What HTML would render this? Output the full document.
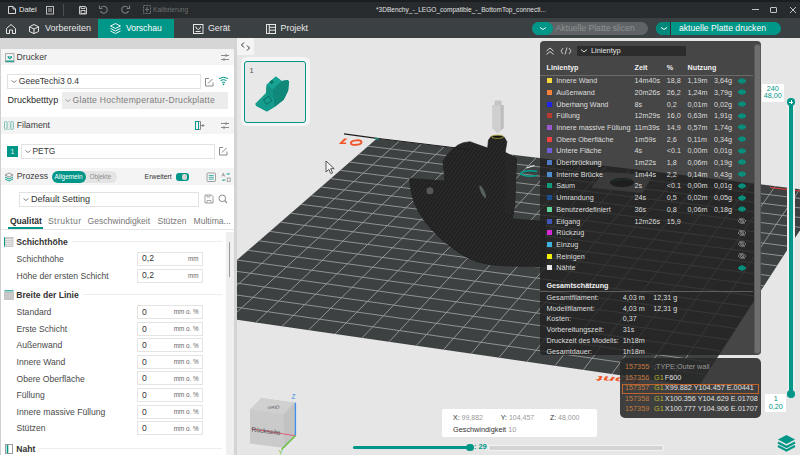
<!DOCTYPE html><html><head><meta charset="utf-8"><style>
html,body{margin:0;padding:0;}
body{width:800px;height:455px;overflow:hidden;position:relative;background:#e6e6e6;font-family:"Liberation Sans",sans-serif;}
.t{position:absolute;white-space:nowrap;}
.r{position:absolute;box-sizing:border-box;}
</style></head><body>
<div class="r" style="left:0px;top:0px;width:800px;height:18px;background:#272b2d;"></div>
<div class="r" style="left:0px;top:0px;width:800px;height:1.5px;background:#1b1e20;"></div>
<svg class="r" style="left:7px;top:5px;" width="10" height="10" viewBox="0 0 10 10"><path d="M1.5 1.5h4.5l2.5 2.5v4.5h-7z" style="stroke:#d8d8d8;fill:none;stroke-width:1;"/><path d="M6 1.5v2.5h2.5" style="stroke:#d8d8d8;fill:none;stroke-width:1;"/></svg>
<div class="t " style="left:19px;top:2.40px;font-size:7.6px;line-height:15.2px;color:#e8e8e8;font-weight:normal;">Datei</div>
<svg class="r" style="left:45px;top:5px;" width="10" height="10" viewBox="0 0 10 10"><rect x="1.5" y="1.5" width="7" height="7.5" style="stroke:#d8d8d8;fill:none;stroke-width:1;stroke:#bbb"/><path d="M3 4h4M3 6h4" style="stroke:#d8d8d8;fill:none;stroke-width:1;stroke:#bbb"/></svg>
<div class="r" style="left:63px;top:4px;width:1px;height:12px;background:#4a4f52;"></div>
<svg class="r" style="left:78px;top:5px;" width="10" height="10" viewBox="0 0 10 10"><path d="M1.5 1.5h6l1 1v6.5h-7z" style="stroke:#d8d8d8;fill:none;stroke-width:1;stroke:#c8c8c8"/><rect x="3" y="5.5" width="4" height="3" style="stroke:#d8d8d8;fill:none;stroke-width:1;stroke:#c8c8c8"/><path d="M3 1.5v2h4v-2" style="stroke:#d8d8d8;fill:none;stroke-width:1;stroke:#c8c8c8"/></svg>
<svg class="r" style="left:98px;top:4px;" width="11" height="11" viewBox="0 0 11 11"><path d="M3 3.5 A3.5 3.5 0 1 1 2.5 7" style="stroke:#7a7e80;fill:none;stroke-width:1.1"/><path d="M1.5 1.5v3h3" style="stroke:#7a7e80;fill:none;stroke-width:1.1"/></svg>
<svg class="r" style="left:120px;top:4px;" width="11" height="11" viewBox="0 0 11 11"><path d="M8 3.5 A3.5 3.5 0 1 0 8.5 7" style="stroke:#7a7e80;fill:none;stroke-width:1.1"/><path d="M9.5 1.5v3h-3" style="stroke:#7a7e80;fill:none;stroke-width:1.1"/></svg>
<svg class="r" style="left:142px;top:4px;" width="10" height="11" viewBox="0 0 10 11"><rect x="1.5" y="1.5" width="7" height="8" style="stroke:#6f7375;fill:none;stroke-width:1;stroke-dasharray:2 1"/><path d="M5 3v5M3 5.5h4" style="stroke:#6f7375;fill:none;stroke-width:1"/></svg>
<div class="t " style="left:153px;top:2.90px;font-size:6.6px;line-height:13.2px;color:#6c7072;font-weight:normal;">Kalibrierung</div>
<div class="t " style="left:376px;top:2.95px;font-size:6.55px;line-height:13.1px;color:#e0e0e0;font-weight:normal;">*3DBenchy_-_LEGO_compatible_-_BottomTop_connecti...</div>
<div class="r" style="left:752px;top:9px;width:7px;height:1px;background:#c4c4c4;"></div>
<div class="r" style="left:770px;top:6.5px;width:7px;height:6.5px;border:1px solid #c4c4c4;border-radius:1px;"></div>
<svg class="r" style="left:788.5px;top:6px;" width="8" height="8" viewBox="0 0 8 8"><path d="M1 1L7 7M7 1L1 7" style="stroke:#c4c4c4;stroke-width:1"/></svg>
<div class="r" style="left:0px;top:18px;width:800px;height:20px;background:#3b4043;"></div>
<div class="r" style="left:98px;top:19px;width:76px;height:19px;background:#009688;"></div>
<svg class="r" style="left:5px;top:23px;" width="12" height="12" viewBox="0 0 12 12"><path d="M1.5 5.5L6 1.5l4.5 4v5h-3v-3.5h-3v3.5h-3z" style="stroke:#e6e6e6;fill:none;stroke-width:1;stroke-linejoin:round"/></svg>
<svg class="r" style="left:28px;top:23px;" width="12" height="12" viewBox="0 0 12 12"><path d="M6 1.5l4.5 2.3v4.7L6 10.6 1.5 8.5V3.8z M1.5 3.8L6 6l4.5-2.2M6 6v4.5" style="stroke:#e6e6e6;fill:none;stroke-width:1;stroke-linejoin:round"/></svg>
<div class="t " style="left:45px;top:19.30px;font-size:9.0px;line-height:18.0px;color:#e8e8e8;font-weight:normal;">Vorbereiten</div>
<svg class="r" style="left:109px;top:22px;" width="13" height="13" viewBox="0 0 13 13"><path d="M6.5 1.5l5 2.5-5 2.5-5-2.5z M1.5 6.5l5 2.5 5-2.5 M1.5 9l5 2.5 5-2.5" style="stroke:#e6e6e6;fill:none;stroke-width:1;stroke:#e8f5f3;stroke-linejoin:round"/></svg>
<div class="t " style="left:126px;top:19.75px;font-size:8.55px;line-height:17.1px;color:#ffffff;font-weight:normal;">Vorschau</div>
<svg class="r" style="left:192px;top:23px;" width="12" height="12" viewBox="0 0 12 12"><rect x="1.5" y="1.5" width="9.5" height="9" style="stroke:#e6e6e6;fill:none;stroke-width:1;"/><path d="M4 3.5v1.5l2.2 1.6 2.2-1.6V3.5" style="stroke:#e6e6e6;fill:none;stroke-width:1;"/><path d="M3.5 8.5h5" style="stroke:#e6e6e6;fill:none;stroke-width:1;"/></svg>
<div class="t " style="left:208px;top:19.50px;font-size:8.8px;line-height:17.6px;color:#e8e8e8;font-weight:normal;">Gerät</div>
<svg class="r" style="left:265px;top:23px;" width="12" height="12" viewBox="0 0 12 12"><rect x="1.5" y="1.5" width="9" height="9" style="stroke:#e6e6e6;fill:none;stroke-width:1;"/><path d="M4.3 1.5v9M4.3 4.3h6.2M4.3 7.2h6.2" style="stroke:#e6e6e6;fill:none;stroke-width:1;"/></svg>
<div class="t " style="left:280.6px;top:19.50px;font-size:8.8px;line-height:17.6px;color:#e8e8e8;font-weight:normal;">Projekt</div>
<div class="r" style="left:532px;top:22px;width:116px;height:13px;background:#5f6365;border-radius:7px;"></div>
<div class="r" style="left:532px;top:22px;width:16px;height:13px;background:#009688;border-radius:7px 0 0 7px;"></div>
<div class="r" style="left:540px;top:22px;width:13px;height:13px;border-radius:50%;background:#009688"></div>
<svg class="r" style="left:537px;top:24px;" width="12" height="9" viewBox="0 0 12 9"><path d="M3 3.5l3 2 3-2" style="stroke:#fff;fill:none;stroke-width:1"/></svg>
<div class="t " style="left:555.5px;top:19.90px;font-size:8.6px;line-height:17.2px;color:#8d9193;font-weight:normal;">Aktuelle Platte slicen</div>
<div class="r" style="left:656px;top:22px;width:125px;height:13px;background:#009688;border-radius:7px;"></div>
<div class="r" style="left:656px;top:22px;width:14px;height:13px;background:#00897b;border-radius:7px 0 0 7px;"></div>
<div class="r" style="left:670px;top:22px;width:1px;height:13px;background:#2e3234;"></div>
<svg class="r" style="left:658px;top:24px;" width="12" height="9" viewBox="0 0 12 9"><path d="M3 3.5l3 2 3-2" style="stroke:#fff;fill:none;stroke-width:1"/></svg>
<div class="t " style="left:679px;top:19.90px;font-size:8.6px;line-height:17.2px;color:#ffffff;font-weight:normal;">aktuelle Platte drucken</div>
<div class="r" style="left:0px;top:38px;width:234px;height:417px;background:#ffffff;"></div>
<div class="r" style="left:0px;top:38px;width:1px;height:417px;background:#cfcfcf;"></div>
<div class="r" style="left:0px;top:38px;width:234px;height:11px;background:#d6d6d6;"></div>
<div class="r" style="left:234px;top:38px;width:3px;height:417px;background:#d4d4d4;"></div>
<div class="r" style="left:1px;top:49px;width:233px;height:16px;background:#f4f4f4;"></div>
<svg class="r" style="left:5px;top:52.5px;" width="10" height="10" viewBox="0 0 10 10"><rect x="0.6" y="0.6" width="8.4" height="8.4" style="stroke:#a0a0a0;fill:none;stroke-width:0.9"/><path d="M2.6 3.2h4.4v1.3L4.8 6.4 2.6 4.5z" fill="#009688"/><path d="M4.8 3.2v2" style="stroke:#fff;stroke-width:0.8"/><path d="M0.6 8.2h8.4" style="stroke:#009688;stroke-width:1.3"/></svg>
<div class="t " style="left:16.5px;top:48.50px;font-size:8.7px;line-height:17.4px;color:#3a3a3a;font-weight:normal;">Drucker</div>
<svg class="r" style="left:220px;top:52.5px;" width="10" height="9" viewBox="0 0 10 9"><path d="M1 2.5h8M1 6.5h8" style="stroke:#8a8a8a;fill:none;stroke-width:1;"/><path d="M6 1v3M4 5v3" style="stroke:#8a8a8a;fill:none;stroke-width:1;"/></svg>
<div class="r" style="left:7px;top:74px;width:194px;height:15px;border:1px solid #e2e2e2;background:#fff;"></div>
<svg class="r" style="left:11px;top:79px;" width="6" height="5" viewBox="0 0 6 5"><path d="M0.5 1.5l2.5 2 2.5-2" style="stroke:#777;fill:none;stroke-width:0.9"/></svg>
<div class="t " style="left:18.8px;top:73.40px;font-size:8.6px;line-height:17.2px;color:#333;font-weight:normal;">GeeeTechi3 0.4</div>
<svg class="r" style="left:204px;top:76.5px;" width="10" height="10" viewBox="0 0 10 10"><path d="M5 1.5H1.5v7.5h7.5V5.5" style="stroke:#8a8a8a;fill:none;stroke-width:1"/><path d="M4 6.5L8.5 2" style="stroke:#8a8a8a;fill:none;stroke-width:1"/></svg>
<svg class="r" style="left:218px;top:76px;" width="11" height="10" viewBox="0 0 11 10"><path d="M1 2.5q4.5-2.5 9 0M2.5 4.5q3-1.7 6 0M4 6.5q1.5-.8 3 0" style="stroke:#009688;fill:none;stroke-width:1"/><circle cx="5.5" cy="8.3" r="0.9" fill="#009688"/></svg>
<div class="t " style="left:7.4px;top:91.15px;font-size:9.05px;line-height:18.1px;color:#2a2a2a;font-weight:normal;">Druckbetttyp</div>
<div class="r" style="left:61.6px;top:92px;width:166.1px;height:16.5px;background:#ececec;"></div>
<svg class="r" style="left:65px;top:97.5px;" width="6" height="5" viewBox="0 0 6 5"><path d="M0.5 1.5l2.5 2 2.5-2" style="stroke:#999;fill:none;stroke-width:0.9"/></svg>
<div class="t " style="left:72.5px;top:91.80px;font-size:8.6px;line-height:17.2px;color:#7c7c7c;font-weight:normal;letter-spacing:0.28px;">Glatte Hochtemperatur-Druckplatte</div>
<div class="r" style="left:1px;top:117px;width:233px;height:17px;background:#f4f4f4;"></div>
<svg class="r" style="left:4px;top:121px;" width="10" height="9" viewBox="0 0 10 9"><rect x="0.5" y="0.5" width="2.5" height="8" rx="1" style="stroke:#6fb8ae;fill:none;stroke-width:0.9"/><rect x="3.7" y="0.5" width="2.5" height="8" rx="1" style="stroke:#a8cfca;fill:none;stroke-width:0.9"/><rect x="6.9" y="0.5" width="2.5" height="8" rx="1" style="stroke:#6fb8ae;fill:none;stroke-width:0.9"/></svg>
<div class="t " style="left:16.7px;top:116.90px;font-size:8.7px;line-height:17.4px;color:#3a3a3a;font-weight:normal;">Filament</div>
<svg class="r" style="left:195px;top:120.5px;" width="10" height="9" viewBox="0 0 10 9"><rect x="0.5" y="0.5" width="3" height="8" style="stroke:#009688;fill:none;stroke-width:1"/><path d="M3.5 0.5h2v8h-2M6 4.5h3.5M8 3v3" style="stroke:#888;fill:none;stroke-width:1"/></svg>
<svg class="r" style="left:220px;top:121px;" width="10" height="9" viewBox="0 0 10 9"><path d="M1 2.5h8M1 6.5h8" style="stroke:#8a8a8a;fill:none;stroke-width:1;"/><path d="M6 1v3M4 5v3" style="stroke:#8a8a8a;fill:none;stroke-width:1;"/></svg>
<div class="r" style="left:7px;top:146px;width:11px;height:11px;background:#009688;"></div>
<div class="t " style="left:-187.5px;width:400px;text-align:center;top:144.60px;font-size:7px;line-height:14px;color:#e8f5f3;font-weight:normal;">1</div>
<div class="r" style="left:21.3px;top:144px;width:194.2px;height:14.5px;border:1px solid #e2e2e2;background:#fff;"></div>
<svg class="r" style="left:25px;top:148.5px;" width="6" height="5" viewBox="0 0 6 5"><path d="M0.5 1.5l2.5 2 2.5-2" style="stroke:#777;fill:none;stroke-width:0.9"/></svg>
<div class="t " style="left:32.5px;top:142.80px;font-size:8.4px;line-height:16.8px;color:#333;font-weight:normal;">PETG</div>
<svg class="r" style="left:218px;top:146px;" width="10" height="10" viewBox="0 0 10 10"><path d="M5 1.5H1.5v7.5h7.5V5.5" style="stroke:#8a8a8a;fill:none;stroke-width:1"/><path d="M4 6.5L8.5 2" style="stroke:#8a8a8a;fill:none;stroke-width:1"/></svg>
<div class="r" style="left:1px;top:168.4px;width:233px;height:16.19999999999999px;background:#f4f4f4;"></div>
<svg class="r" style="left:4px;top:172px;" width="10" height="10" viewBox="0 0 10 10"><path d="M5 1l4 2-4 2-4-2z" style="stroke:#8a8a8a;fill:none;stroke-width:0.9"/><path d="M1 5l4 2 4-2M1 7l4 2 4-2" style="stroke:#009688;fill:none;stroke-width:0.9"/></svg>
<div class="t " style="left:16.7px;top:168.10px;font-size:8.7px;line-height:17.4px;color:#3a3a3a;font-weight:normal;">Prozess</div>
<div class="r" style="left:52px;top:171.4px;width:65px;height:11.199999999999989px;background:#e4e4e4;border-radius:6px;"></div>
<div class="r" style="left:52px;top:171.4px;width:34px;height:11.199999999999989px;background:#009688;border-radius:6px;"></div>
<div class="t " style="left:54.5px;top:170.60px;font-size:6.4px;line-height:12.8px;color:#ffffff;font-weight:normal;">Allgemein</div>
<div class="t " style="left:89.5px;top:170.70px;font-size:6.3px;line-height:12.6px;color:#8c8c8c;font-weight:normal;">Objekte</div>
<div class="t " style="left:144.6px;top:169.70px;font-size:6.9px;line-height:13.8px;color:#333;font-weight:normal;">Erweitert</div>
<div class="r" style="left:176px;top:173px;width:12.5px;height:7.800000000000011px;background:#009688;border-radius:3px;"></div>
<div class="r" style="left:181.6px;top:174.2px;width:5.599999999999994px;height:5.400000000000006px;background:#d4d4d4;border-radius:2px;"></div>
<svg class="r" style="left:206px;top:172px;" width="11" height="11" viewBox="0 0 11 11"><rect x="1" y="1" width="8.5" height="8.5" rx="0.8" style="stroke:#8a8a8a;fill:none;stroke-width:0.8"/><path d="M2.8 3.5h5M2.8 5.3h5M2.8 7.1h5" style="stroke:#009688;fill:none;stroke-width:0.7"/></svg>
<svg class="r" style="left:221px;top:171.5px;" width="11" height="11" viewBox="0 0 11 11"><path d="M1 4.5L2.3 1l1.3 3.5M1.5 3.3h1.6" style="stroke:#8a8a8a;fill:none;stroke-width:0.7"/><path d="M5.5 2h3l-1-1M8.5 2" style="stroke:#009688;fill:none;stroke-width:0.8"/><path d="M4.5 8h-3l1 1" style="stroke:#009688;fill:none;stroke-width:0.8"/><rect x="6.2" y="6" width="3" height="3.5" style="stroke:#8a8a8a;fill:none;stroke-width:0.7"/></svg>
<div class="r" style="left:19px;top:192.2px;width:179.5px;height:14.800000000000011px;border:1px solid #e2e2e2;background:#fff;"></div>
<svg class="r" style="left:23px;top:196.5px;" width="6" height="5" viewBox="0 0 6 5"><path d="M0.5 1.5l2.5 2 2.5-2" style="stroke:#777;fill:none;stroke-width:0.9"/></svg>
<div class="t " style="left:31px;top:190.30px;font-size:9.0px;line-height:18.0px;color:#333;font-weight:normal;">Default Setting</div>
<svg class="r" style="left:204px;top:194px;" width="10" height="10" viewBox="0 0 10 10"><path d="M1 1h6.5l1.5 1.5V9H1z" style="stroke:#8a8a8a;fill:none;stroke-width:0.8"/><path d="M3 9V6.5h4V9M3 1v2h3V1" style="stroke:#8a8a8a;fill:none;stroke-width:0.7"/></svg>
<svg class="r" style="left:218px;top:194px;" width="10" height="10" viewBox="0 0 10 10"><circle cx="4.3" cy="4.3" r="3.3" style="stroke:#8a8a8a;fill:none;stroke-width:1"/><path d="M6.7 6.7L9 9" style="stroke:#8a8a8a;stroke-width:1.1"/></svg>
<div class="t " style="left:9.9px;top:213.20px;font-size:8.6px;line-height:17.2px;color:#2f2f2f;font-weight:bold;">Qualität</div>
<div class="t " style="left:47.9px;top:213.20px;font-size:8.6px;line-height:17.2px;color:#777;font-weight:normal;letter-spacing:0.45px;">Struktur</div>
<div class="t " style="left:87.5px;top:213.20px;font-size:8.6px;line-height:17.2px;color:#777;font-weight:normal;">Geschwindigkeit</div>
<div class="t " style="left:157.5px;top:213.20px;font-size:8.6px;line-height:17.2px;color:#777;font-weight:normal;">Stützen</div>
<div class="t " style="left:193.5px;top:213.20px;font-size:8.6px;line-height:17.2px;color:#777;font-weight:normal;">Multima...</div>
<div class="r" style="left:1px;top:229px;width:233px;height:1px;background:#e6e6e6;"></div>
<div class="r" style="left:8px;top:227.4px;width:34.6px;height:1.799999999999983px;background:#009688;"></div>
<div class="r" style="left:225.5px;top:232.4px;width:8.199999999999989px;height:222.6px;background:#efefef;"></div>
<div class="r" style="left:228.7px;top:242.3px;width:1.5px;height:34.69999999999999px;background:#9a9a9a;border-radius:1px;"></div>
<svg class="r" style="left:4px;top:237px;" width="10" height="10" viewBox="0 0 10 10"><rect x="1" y="0.5" width="8" height="9" style="fill:#cfcfcf;stroke:#b0b0b0;stroke-width:0.6"/><path d="M1 2.5h8M1 4.5h8M1 6.5h8M1 8.5h8" style="stroke:#eee;stroke-width:0.6"/><path d="M0.5 0.5v9" style="stroke:#009688;stroke-width:1"/></svg>
<div class="t " style="left:16.2px;top:233.70px;font-size:8.6px;line-height:17.2px;color:#333;font-weight:bold;">Schichthöhe</div>
<div class="r" style="left:71.8px;top:241.0px;width:150.2px;height:1px;background:#ededed"></div>
<div class="t " style="left:16.5px;top:250.60px;font-size:8.6px;line-height:17.2px;color:#4a4a4a;font-weight:normal;">Schichthöhe</div>
<div class="r" style="left:137px;top:251.5px;width:66.30000000000001px;height:14.0px;border:1px solid #e4e4e4;background:#fff;"></div>
<div class="t " style="left:142px;top:250.40px;font-size:8.6px;line-height:17.2px;color:#333;font-weight:normal;">0,2</div>
<div class="t " style="right:601.5px;top:252.80px;font-size:6.3px;line-height:12.6px;color:#666;font-weight:normal;">mm</div>
<div class="t " style="left:16.5px;top:267.60px;font-size:8.6px;line-height:17.2px;color:#4a4a4a;font-weight:normal;">Höhe der ersten Schicht</div>
<div class="r" style="left:137px;top:268.5px;width:66.30000000000001px;height:14.0px;border:1px solid #e4e4e4;background:#fff;"></div>
<div class="t " style="left:142px;top:267.40px;font-size:8.6px;line-height:17.2px;color:#333;font-weight:normal;">0,2</div>
<div class="t " style="right:601.5px;top:269.80px;font-size:6.3px;line-height:12.6px;color:#666;font-weight:normal;">mm</div>
<svg class="r" style="left:4px;top:290px;" width="10" height="10" viewBox="0 0 10 10"><rect x="0.5" y="2" width="9" height="7.5" style="fill:#c8c8c8;stroke:#b0b0b0;stroke-width:0.6"/><path d="M0.5 0.8h9" style="stroke:#009688;stroke-width:1"/></svg>
<div class="t " style="left:16.2px;top:286.70px;font-size:8.6px;line-height:17.2px;color:#333;font-weight:bold;">Breite der Linie</div>
<div class="r" style="left:82.8px;top:294.0px;width:139.2px;height:1px;background:#ededed"></div>
<div class="t " style="left:16.5px;top:304.10px;font-size:8.6px;line-height:17.2px;color:#4a4a4a;font-weight:normal;">Standard</div>
<div class="r" style="left:137px;top:305.0px;width:66.30000000000001px;height:14.0px;border:1px solid #e4e4e4;background:#fff;"></div>
<div class="t " style="left:142px;top:303.90px;font-size:8.6px;line-height:17.2px;color:#333;font-weight:normal;">0</div>
<div class="t " style="right:601.5px;top:306.30px;font-size:6.3px;line-height:12.6px;color:#666;font-weight:normal;">mm o. %</div>
<div class="t " style="left:16.5px;top:320.72px;font-size:8.6px;line-height:17.2px;color:#4a4a4a;font-weight:normal;">Erste Schicht</div>
<div class="r" style="left:137px;top:321.62px;width:66.30000000000001px;height:14.0px;border:1px solid #e4e4e4;background:#fff;"></div>
<div class="t " style="left:142px;top:320.52px;font-size:8.6px;line-height:17.2px;color:#333;font-weight:normal;">0</div>
<div class="t " style="right:601.5px;top:322.92px;font-size:6.3px;line-height:12.6px;color:#666;font-weight:normal;">mm o. %</div>
<div class="t " style="left:16.5px;top:337.34px;font-size:8.6px;line-height:17.2px;color:#4a4a4a;font-weight:normal;">Außenwand</div>
<div class="r" style="left:137px;top:338.24px;width:66.30000000000001px;height:14.0px;border:1px solid #e4e4e4;background:#fff;"></div>
<div class="t " style="left:142px;top:337.14px;font-size:8.6px;line-height:17.2px;color:#333;font-weight:normal;">0</div>
<div class="t " style="right:601.5px;top:339.54px;font-size:6.3px;line-height:12.6px;color:#666;font-weight:normal;">mm o. %</div>
<div class="t " style="left:16.5px;top:353.96px;font-size:8.6px;line-height:17.2px;color:#4a4a4a;font-weight:normal;">Innere Wand</div>
<div class="r" style="left:137px;top:354.86px;width:66.30000000000001px;height:14.0px;border:1px solid #e4e4e4;background:#fff;"></div>
<div class="t " style="left:142px;top:353.76px;font-size:8.6px;line-height:17.2px;color:#333;font-weight:normal;">0</div>
<div class="t " style="right:601.5px;top:356.16px;font-size:6.3px;line-height:12.6px;color:#666;font-weight:normal;">mm o. %</div>
<div class="t " style="left:16.5px;top:370.58px;font-size:8.6px;line-height:17.2px;color:#4a4a4a;font-weight:normal;">Obere Oberfläche</div>
<div class="r" style="left:137px;top:371.48px;width:66.30000000000001px;height:14.0px;border:1px solid #e4e4e4;background:#fff;"></div>
<div class="t " style="left:142px;top:370.38px;font-size:8.6px;line-height:17.2px;color:#333;font-weight:normal;">0</div>
<div class="t " style="right:601.5px;top:372.78px;font-size:6.3px;line-height:12.6px;color:#666;font-weight:normal;">mm o. %</div>
<div class="t " style="left:16.5px;top:387.20px;font-size:8.6px;line-height:17.2px;color:#4a4a4a;font-weight:normal;">Füllung</div>
<div class="r" style="left:137px;top:388.1px;width:66.30000000000001px;height:14.0px;border:1px solid #e4e4e4;background:#fff;"></div>
<div class="t " style="left:142px;top:387.00px;font-size:8.6px;line-height:17.2px;color:#333;font-weight:normal;">0</div>
<div class="t " style="right:601.5px;top:389.40px;font-size:6.3px;line-height:12.6px;color:#666;font-weight:normal;">mm o. %</div>
<div class="t " style="left:16.5px;top:403.82px;font-size:8.6px;line-height:17.2px;color:#4a4a4a;font-weight:normal;">Innere massive Füllung</div>
<div class="r" style="left:137px;top:404.72px;width:66.30000000000001px;height:14.0px;border:1px solid #e4e4e4;background:#fff;"></div>
<div class="t " style="left:142px;top:403.62px;font-size:8.6px;line-height:17.2px;color:#333;font-weight:normal;">0</div>
<div class="t " style="right:601.5px;top:406.02px;font-size:6.3px;line-height:12.6px;color:#666;font-weight:normal;">mm o. %</div>
<div class="t " style="left:16.5px;top:420.44px;font-size:8.6px;line-height:17.2px;color:#4a4a4a;font-weight:normal;">Stützen</div>
<div class="r" style="left:137px;top:421.34000000000003px;width:66.30000000000001px;height:14.0px;border:1px solid #e4e4e4;background:#fff;"></div>
<div class="t " style="left:142px;top:420.24px;font-size:8.6px;line-height:17.2px;color:#333;font-weight:normal;">0</div>
<div class="t " style="right:601.5px;top:422.64px;font-size:6.3px;line-height:12.6px;color:#666;font-weight:normal;">mm o. %</div>
<svg class="r" style="left:4px;top:444px;" width="10" height="10" viewBox="0 0 10 10"><rect x="1.5" y="0.5" width="7" height="9" style="fill:#fff;stroke:#9a9a9a;stroke-width:1"/><path d="M3.5 1v8" style="stroke:#009688;stroke-width:1.6"/></svg>
<div class="t " style="left:16.2px;top:440.70px;font-size:8.6px;line-height:17.2px;color:#333;font-weight:bold;">Naht</div>
<div class="r" style="left:39.3px;top:448.0px;width:182.7px;height:1px;background:#ededed"></div>
<div class="r" style="left:237px;top:38px;width:563px;height:417px;background:#e6e6e6;"></div>
<svg class="r" style="left:237px;top:38px;overflow:hidden;" width="563" height="417" viewBox="0 0 563 417"><g transform="translate(-237,-38)"><polygon points="376.9,138.5 824.8,192.1 698.6,386.6 177.9,311.2" fill="#3e4141"/><path d="M399.3 141.1L203.7 314.9 M368.0 146.2L819.2 200.7 M421.8 143.8L229.6 318.7 M358.9 154.1L813.4 209.5 M444.4 146.5L255.7 322.5 M349.6 162.1L807.6 218.5 M467.2 149.3L282.0 326.3 M340.2 170.3L801.7 227.6 M490.1 152.0L308.5 330.1 M330.7 178.6L795.7 236.9 M513.1 154.8L335.1 334.0 M321.0 187.0L789.6 246.4 M536.3 157.5L362.0 337.9 M311.1 195.6L783.3 256.0 M559.6 160.3L389.0 341.8 M301.0 204.3L777.0 265.8 M583.0 163.1L416.2 345.7 M290.8 213.2L770.5 275.8 M606.5 165.9L443.5 349.7 M280.4 222.2L763.9 285.9 M630.2 168.8L471.1 353.7 M269.8 231.4L757.2 296.3 M654.1 171.6L498.9 357.7 M259.0 240.8L750.4 306.8 M678.0 174.5L526.8 361.8 M248.1 250.3L743.4 317.6 M702.1 177.4L555.0 365.8 M236.9 260.0L736.3 328.5 M726.4 180.3L583.3 369.9 M225.5 269.8L729.1 339.7 M750.8 183.2L611.8 374.1 M213.9 279.9L721.7 351.1 M775.3 186.1L640.5 378.2 M202.1 290.1L714.1 362.7 M800.0 189.1L669.5 382.4 M190.1 300.6L706.5 374.6" stroke="#959898" stroke-width="0.95" fill="none"/><path d="M344 133.8L377 138.3" stroke="#1e1e1e" stroke-width="1.3"/></g></svg>
<svg class="r" style="left:237px;top:38px;overflow:hidden;" width="563" height="417" viewBox="0 0 563 417"><g transform="translate(-237,-38)"><defs><pattern id="hatch" width="3" height="3" patternUnits="userSpaceOnUse" patternTransform="rotate(35)"><rect width="3" height="3" fill="#212121"/><rect width="1" height="3" fill="#2d2d2d"/></pattern></defs><polygon points="409.7,178.4 444.8,181.0 444.0,171.3 443.0,161.6 446.6,155.5 452.7,149.3 458.0,145.0 463.3,142.7 470.0,141.7 477.0,144.3 487.6,147.9 488.5,140.0 491.1,136.4 504.3,137.3 506.9,141.7 505.2,152.3 516.6,158.4 514.8,205.0 512.3,219.0 540.4,221.0 545.0,221.5 545.0,267.2 539.0,267.0 522.5,266.3 505.0,265.8 490.0,264.7 477.0,261.8 465.4,256.7 453.5,248.8 441.6,239.6 432.4,230.3 424.5,221.1 417.9,210.5 413.3,200.0 411.0,190.0 410.0,184.0" fill="url(#hatch)" stroke="#1a1a1a" stroke-width="0.6"/><polygon points="505.2,152.3 516.6,158.4 514.8,205.0 512.3,214.3 505.0,213.0" fill="#2a2a2a" opacity="0.6"/><ellipse cx="429.9" cy="190.7" rx="3.5" ry="3.5" fill="#565858"/><ellipse cx="482.7" cy="191.8" rx="1.8" ry="7" fill="#56605e" transform="rotate(-25 482.7 191.8)"/><ellipse cx="497.5" cy="136.8" rx="6" ry="1.6" fill="#141414" stroke="#9a9430" stroke-width="1"/><polygon points="492.1,105 503.6,105 503.6,128 497.6,133.5 492.1,128" fill="#cfcfcf"/><polygon points="500.8,105 503.6,105 503.6,128 500.8,130.5" fill="#bcbcbc"/><rect x="494.6" y="100.5" width="7" height="5" rx="1" fill="#c4c4c4"/><path d="M537 171.5A10 2.6 0 1 0 537 175.5" fill="none" stroke="#00a08c" stroke-width="1.5"/><path d="M526.5 168l8 -2.5" stroke="#e8e8e8" stroke-width="1.1"/><polygon points="605,173 651,176 642,192 593,187" fill="#a6a6a6" stroke="#a6a6a6" stroke-width="2" stroke-linejoin="round"/><ellipse cx="622" cy="182.5" rx="12" ry="4.5" fill="#0c0c0c"/><path d="M612 181Q622 178 632 180" stroke="#0a5a50" stroke-width="1.6" fill="none"/><polygon points="344.2,138.4 347.6,138.4 342.6,142.6 346.4,142.6 345.8,144 338.8,144" fill="#f0562a"/><ellipse cx="356.2" cy="142.6" rx="5.3" ry="2.2" transform="rotate(-6 356.2 142.6)" stroke="#f0562a" stroke-width="1.9" fill="none"/><text x="0" y="0" font-family="Liberation Sans" font-weight="bold" font-size="7" fill="#f0562a" transform="matrix(-2.75,-0.17,0.7,-1.05,642,378.5)">front</text><path d="M377 138.3L470 149.6" stroke="#1e1e1e" stroke-width="1"/><path d="M375 138.6L378.8 139.1" stroke="#00a08c" stroke-width="1.4"/><path d="M770 187.5L800 191" stroke="#e23b3b" stroke-width="1.1"/></g></svg>
<svg class="r" style="left:325px;top:160px;" width="10" height="15" viewBox="0 0 10 15"><path d="M1 1v11l2.8-2.6 2 4.2 1.8-.8-2-4.1h3.6z" fill="#f4f4f4" stroke="#333" stroke-width="0.8" stroke-linejoin="round"/></svg>
<svg class="r" style="left:237px;top:385px;overflow:hidden;" width="563" height="70" viewBox="0 0 563 70"><g transform="translate(-237,-385)"><polygon points="250,409.6 261.5,398.1 294.6,402.7 294.6,435.8 284.6,448.1 250,443.5" fill="#cacaca"/>
<polygon points="250,409.6 261.5,398.1 294.6,402.7 283.5,414.5" fill="#d0d0d0"/>
<polygon points="283.5,414.5 294.6,402.7 294.6,435.8 284.6,448.1" fill="#c2c2c2"/>
<path d="M295.4 402.7V435.8" stroke="#3d8ee6" stroke-width="1.4"/>
<path d="M251.5 428.8L295.4 435.8" stroke="#e0607a" stroke-width="1"/>
<path d="M295.4 435.8L281.5 449.6" stroke="#66c23a" stroke-width="1.4"/>
<text x="291.5" y="399" font-family="Liberation Sans" font-size="6.5" fill="#3d8ee6">Z</text>
<text x="278.5" y="455" font-family="Liberation Sans" font-size="6.5" fill="#66c23a">Y</text>
<text x="0" y="0" font-family="Liberation Sans" font-size="6.6" fill="#4a4a4a" transform="matrix(1,0.12,0,1,251.5,431.5)">Rückseite</text>
<text x="0" y="0" font-family="Liberation Sans" font-size="4.5" fill="#555" transform="matrix(-1.1,0.08,0,-1,279.5,405.5)">Oben</text>
</g></svg>
<div class="r" style="left:540px;top:41px;width:221px;height:314px;background:rgba(34,34,34,0.82);border-radius:4px;"></div>
<div class="r" style="left:753.5px;top:44px;width:7.0px;height:310px;background:#5a5a5a;border-radius:3px;"></div>
<div class="r" style="left:754.5px;top:45px;width:5.0px;height:308px;background:#6e6e6e;border-radius:2.5px;"></div>
<svg class="r" style="left:545px;top:46px;" width="10" height="10" viewBox="0 0 10 10"><path d="M1.5 5l3.5-3 3.5 3M1.5 8.5l3.5-3 3.5 3" style="stroke:#d8d8d8;fill:none;stroke-width:1"/></svg>
<svg class="r" style="left:560px;top:46px;" width="12" height="10" viewBox="0 0 12 10"><path d="M3 2L1 5l2 3M9 2l2 3-2 3M7 1.5L5 8.5" style="stroke:#d0d0d0;fill:none;stroke-width:0.9"/></svg>
<div class="r" style="left:577px;top:46px;width:109px;height:10px;background:#2c2c2c;"></div>
<svg class="r" style="left:580px;top:48px;" width="8" height="6" viewBox="0 0 8 6"><path d="M1 1.5l3 2.5 3-2.5" style="stroke:#ddd;fill:none;stroke-width:1"/></svg>
<div class="t " style="left:591px;top:43.60px;font-size:7.4px;line-height:14.8px;color:#e8e8e8;font-weight:normal;">Linientyp</div>
<div class="t " style="left:546.5px;top:61.10px;font-size:7.2px;line-height:14.4px;color:#f0f0f0;font-weight:bold;">Linientyp</div>
<div class="t " style="left:634.6px;top:61.10px;font-size:7.2px;line-height:14.4px;color:#f0f0f0;font-weight:bold;">Zeit</div>
<div class="t " style="left:666.7px;top:61.10px;font-size:7.2px;line-height:14.4px;color:#f0f0f0;font-weight:bold;">%</div>
<div class="t " style="left:687.6px;top:61.10px;font-size:7.2px;line-height:14.4px;color:#f0f0f0;font-weight:bold;">Nutzung</div>
<div class="r" style="left:540px;top:74.5px;width:213px;height:1.0px;background:#6a6a6a;"></div>
<div class="r" style="left:547px;top:78.1px;width:5px;height:5.0px;background:#f5d83c;"></div>
<div class="t " style="left:556.3px;top:74.10px;font-size:7.2px;line-height:14.4px;color:#dedede;font-weight:normal;">Innere Wand</div>
<div class="t " style="left:634.6px;top:74.10px;font-size:7.2px;line-height:14.4px;color:#dedede;font-weight:normal;">14m40s</div>
<div class="t " style="left:666.7px;top:74.10px;font-size:7.2px;line-height:14.4px;color:#dedede;font-weight:normal;">18,8</div>
<div class="t " style="left:687.6px;top:74.10px;font-size:7.2px;line-height:14.4px;color:#dedede;font-weight:normal;">1,19m</div>
<div class="t " style="left:714px;top:74.10px;font-size:7.2px;line-height:14.4px;color:#dedede;font-weight:normal;">3,64g</div>
<svg class="r" style="left:737px;top:76.5px;" width="10" height="8" viewBox="0 0 10 8"><path d="M0.8 4Q5 -1.5 9.2 4Q5 9.5 0.8 4z" fill="#009c88"/><circle cx="5" cy="4" r="1.7" fill="#0a6e62"/><circle cx="5" cy="4" r="0.8" fill="#1fc4ac"/></svg>
<div class="r" style="left:547px;top:89.80999999999999px;width:5px;height:5.0px;background:#f5823a;"></div>
<div class="t " style="left:556.3px;top:85.81px;font-size:7.2px;line-height:14.4px;color:#dedede;font-weight:normal;">Außenwand</div>
<div class="t " style="left:634.6px;top:85.81px;font-size:7.2px;line-height:14.4px;color:#dedede;font-weight:normal;">20m26s</div>
<div class="t " style="left:666.7px;top:85.81px;font-size:7.2px;line-height:14.4px;color:#dedede;font-weight:normal;">26,2</div>
<div class="t " style="left:687.6px;top:85.81px;font-size:7.2px;line-height:14.4px;color:#dedede;font-weight:normal;">1,24m</div>
<div class="t " style="left:714px;top:85.81px;font-size:7.2px;line-height:14.4px;color:#dedede;font-weight:normal;">3,79g</div>
<svg class="r" style="left:737px;top:88.21px;" width="10" height="8" viewBox="0 0 10 8"><path d="M0.8 4Q5 -1.5 9.2 4Q5 9.5 0.8 4z" fill="#009c88"/><circle cx="5" cy="4" r="1.7" fill="#0a6e62"/><circle cx="5" cy="4" r="0.8" fill="#1fc4ac"/></svg>
<div class="r" style="left:547px;top:101.52px;width:5px;height:5.0px;background:#2222ee;"></div>
<div class="t " style="left:556.3px;top:97.52px;font-size:7.2px;line-height:14.4px;color:#dedede;font-weight:normal;">Überhang Wand</div>
<div class="t " style="left:634.6px;top:97.52px;font-size:7.2px;line-height:14.4px;color:#dedede;font-weight:normal;">8s</div>
<div class="t " style="left:666.7px;top:97.52px;font-size:7.2px;line-height:14.4px;color:#dedede;font-weight:normal;">0,2</div>
<div class="t " style="left:687.6px;top:97.52px;font-size:7.2px;line-height:14.4px;color:#dedede;font-weight:normal;">0,01m</div>
<div class="t " style="left:714px;top:97.52px;font-size:7.2px;line-height:14.4px;color:#dedede;font-weight:normal;">0,02g</div>
<svg class="r" style="left:737px;top:99.92px;" width="10" height="8" viewBox="0 0 10 8"><path d="M0.8 4Q5 -1.5 9.2 4Q5 9.5 0.8 4z" fill="#009c88"/><circle cx="5" cy="4" r="1.7" fill="#0a6e62"/><circle cx="5" cy="4" r="0.8" fill="#1fc4ac"/></svg>
<div class="r" style="left:547px;top:113.23px;width:5px;height:5.0px;background:#b83a2e;"></div>
<div class="t " style="left:556.3px;top:109.23px;font-size:7.2px;line-height:14.4px;color:#dedede;font-weight:normal;">Füllung</div>
<div class="t " style="left:634.6px;top:109.23px;font-size:7.2px;line-height:14.4px;color:#dedede;font-weight:normal;">12m29s</div>
<div class="t " style="left:666.7px;top:109.23px;font-size:7.2px;line-height:14.4px;color:#dedede;font-weight:normal;">16,0</div>
<div class="t " style="left:687.6px;top:109.23px;font-size:7.2px;line-height:14.4px;color:#dedede;font-weight:normal;">0,63m</div>
<div class="t " style="left:714px;top:109.23px;font-size:7.2px;line-height:14.4px;color:#dedede;font-weight:normal;">1,91g</div>
<svg class="r" style="left:737px;top:111.63000000000001px;" width="10" height="8" viewBox="0 0 10 8"><path d="M0.8 4Q5 -1.5 9.2 4Q5 9.5 0.8 4z" fill="#009c88"/><circle cx="5" cy="4" r="1.7" fill="#0a6e62"/><circle cx="5" cy="4" r="0.8" fill="#1fc4ac"/></svg>
<div class="r" style="left:547px;top:124.93999999999998px;width:5px;height:5.000000000000014px;background:#9b59d0;"></div>
<div class="t " style="left:556.3px;top:120.94px;font-size:7.2px;line-height:14.4px;color:#dedede;font-weight:normal;">Innere massive Füllung</div>
<div class="t " style="left:634.6px;top:120.94px;font-size:7.2px;line-height:14.4px;color:#dedede;font-weight:normal;">11m39s</div>
<div class="t " style="left:666.7px;top:120.94px;font-size:7.2px;line-height:14.4px;color:#dedede;font-weight:normal;">14,9</div>
<div class="t " style="left:687.6px;top:120.94px;font-size:7.2px;line-height:14.4px;color:#dedede;font-weight:normal;">0,57m</div>
<div class="t " style="left:714px;top:120.94px;font-size:7.2px;line-height:14.4px;color:#dedede;font-weight:normal;">1,74g</div>
<svg class="r" style="left:737px;top:123.33999999999999px;" width="10" height="8" viewBox="0 0 10 8"><path d="M0.8 4Q5 -1.5 9.2 4Q5 9.5 0.8 4z" fill="#009c88"/><circle cx="5" cy="4" r="1.7" fill="#0a6e62"/><circle cx="5" cy="4" r="0.8" fill="#1fc4ac"/></svg>
<div class="r" style="left:547px;top:136.65px;width:5px;height:5.0px;background:#f04040;"></div>
<div class="t " style="left:556.3px;top:132.65px;font-size:7.2px;line-height:14.4px;color:#dedede;font-weight:normal;">Obere Oberfläche</div>
<div class="t " style="left:634.6px;top:132.65px;font-size:7.2px;line-height:14.4px;color:#dedede;font-weight:normal;">1m59s</div>
<div class="t " style="left:666.7px;top:132.65px;font-size:7.2px;line-height:14.4px;color:#dedede;font-weight:normal;">2,6</div>
<div class="t " style="left:687.6px;top:132.65px;font-size:7.2px;line-height:14.4px;color:#dedede;font-weight:normal;">0,11m</div>
<div class="t " style="left:714px;top:132.65px;font-size:7.2px;line-height:14.4px;color:#dedede;font-weight:normal;">0,34g</div>
<svg class="r" style="left:737px;top:135.04999999999998px;" width="10" height="8" viewBox="0 0 10 8"><path d="M0.8 4Q5 -1.5 9.2 4Q5 9.5 0.8 4z" fill="#009c88"/><circle cx="5" cy="4" r="1.7" fill="#0a6e62"/><circle cx="5" cy="4" r="0.8" fill="#1fc4ac"/></svg>
<div class="r" style="left:547px;top:148.36px;width:5px;height:5.0px;background:#6f5fd6;"></div>
<div class="t " style="left:556.3px;top:144.36px;font-size:7.2px;line-height:14.4px;color:#dedede;font-weight:normal;">Untere Fläche</div>
<div class="t " style="left:634.6px;top:144.36px;font-size:7.2px;line-height:14.4px;color:#dedede;font-weight:normal;">4s</div>
<div class="t " style="left:666.7px;top:144.36px;font-size:7.2px;line-height:14.4px;color:#dedede;font-weight:normal;">&lt;0.1</div>
<div class="t " style="left:687.6px;top:144.36px;font-size:7.2px;line-height:14.4px;color:#dedede;font-weight:normal;">0,00m</div>
<div class="t " style="left:714px;top:144.36px;font-size:7.2px;line-height:14.4px;color:#dedede;font-weight:normal;">0,01g</div>
<svg class="r" style="left:737px;top:146.76px;" width="10" height="8" viewBox="0 0 10 8"><path d="M0.8 4Q5 -1.5 9.2 4Q5 9.5 0.8 4z" fill="#009c88"/><circle cx="5" cy="4" r="1.7" fill="#0a6e62"/><circle cx="5" cy="4" r="0.8" fill="#1fc4ac"/></svg>
<div class="r" style="left:547px;top:160.07px;width:5px;height:5.0px;background:#4f79c0;"></div>
<div class="t " style="left:556.3px;top:156.07px;font-size:7.2px;line-height:14.4px;color:#dedede;font-weight:normal;">Überbrückung</div>
<div class="t " style="left:634.6px;top:156.07px;font-size:7.2px;line-height:14.4px;color:#dedede;font-weight:normal;">1m22s</div>
<div class="t " style="left:666.7px;top:156.07px;font-size:7.2px;line-height:14.4px;color:#dedede;font-weight:normal;">1,8</div>
<div class="t " style="left:687.6px;top:156.07px;font-size:7.2px;line-height:14.4px;color:#dedede;font-weight:normal;">0,06m</div>
<div class="t " style="left:714px;top:156.07px;font-size:7.2px;line-height:14.4px;color:#dedede;font-weight:normal;">0,19g</div>
<svg class="r" style="left:737px;top:158.46999999999997px;" width="10" height="8" viewBox="0 0 10 8"><path d="M0.8 4Q5 -1.5 9.2 4Q5 9.5 0.8 4z" fill="#009c88"/><circle cx="5" cy="4" r="1.7" fill="#0a6e62"/><circle cx="5" cy="4" r="0.8" fill="#1fc4ac"/></svg>
<div class="r" style="left:547px;top:171.78000000000003px;width:5px;height:5.0px;background:#4f8fd0;"></div>
<div class="t " style="left:556.3px;top:167.78px;font-size:7.2px;line-height:14.4px;color:#dedede;font-weight:normal;">Interne Brücke</div>
<div class="t " style="left:634.6px;top:167.78px;font-size:7.2px;line-height:14.4px;color:#dedede;font-weight:normal;">1m44s</div>
<div class="t " style="left:666.7px;top:167.78px;font-size:7.2px;line-height:14.4px;color:#dedede;font-weight:normal;">2,2</div>
<div class="t " style="left:687.6px;top:167.78px;font-size:7.2px;line-height:14.4px;color:#dedede;font-weight:normal;">0,14m</div>
<div class="t " style="left:714px;top:167.78px;font-size:7.2px;line-height:14.4px;color:#dedede;font-weight:normal;">0,43g</div>
<svg class="r" style="left:737px;top:170.18px;" width="10" height="8" viewBox="0 0 10 8"><path d="M0.8 4Q5 -1.5 9.2 4Q5 9.5 0.8 4z" fill="#009c88"/><circle cx="5" cy="4" r="1.7" fill="#0a6e62"/><circle cx="5" cy="4" r="0.8" fill="#1fc4ac"/></svg>
<div class="r" style="left:547px;top:183.49px;width:5px;height:5.0px;background:#0f9a7a;"></div>
<div class="t " style="left:556.3px;top:179.49px;font-size:7.2px;line-height:14.4px;color:#dedede;font-weight:normal;">Saum</div>
<div class="t " style="left:634.6px;top:179.49px;font-size:7.2px;line-height:14.4px;color:#dedede;font-weight:normal;">2s</div>
<div class="t " style="left:666.7px;top:179.49px;font-size:7.2px;line-height:14.4px;color:#dedede;font-weight:normal;">&lt;0.1</div>
<div class="t " style="left:687.6px;top:179.49px;font-size:7.2px;line-height:14.4px;color:#dedede;font-weight:normal;">0,00m</div>
<div class="t " style="left:714px;top:179.49px;font-size:7.2px;line-height:14.4px;color:#dedede;font-weight:normal;">0,01g</div>
<svg class="r" style="left:737px;top:181.89px;" width="10" height="8" viewBox="0 0 10 8"><path d="M0.8 4Q5 -1.5 9.2 4Q5 9.5 0.8 4z" fill="#009c88"/><circle cx="5" cy="4" r="1.7" fill="#0a6e62"/><circle cx="5" cy="4" r="0.8" fill="#1fc4ac"/></svg>
<div class="r" style="left:547px;top:195.20000000000002px;width:5px;height:5.0px;background:#1a4e8c;"></div>
<div class="t " style="left:556.3px;top:191.20px;font-size:7.2px;line-height:14.4px;color:#dedede;font-weight:normal;">Umrandung</div>
<div class="t " style="left:634.6px;top:191.20px;font-size:7.2px;line-height:14.4px;color:#dedede;font-weight:normal;">24s</div>
<div class="t " style="left:666.7px;top:191.20px;font-size:7.2px;line-height:14.4px;color:#dedede;font-weight:normal;">0,5</div>
<div class="t " style="left:687.6px;top:191.20px;font-size:7.2px;line-height:14.4px;color:#dedede;font-weight:normal;">0,02m</div>
<div class="t " style="left:714px;top:191.20px;font-size:7.2px;line-height:14.4px;color:#dedede;font-weight:normal;">0,05g</div>
<svg class="r" style="left:737px;top:193.6px;" width="10" height="8" viewBox="0 0 10 8"><path d="M0.8 4Q5 -1.5 9.2 4Q5 9.5 0.8 4z" fill="#009c88"/><circle cx="5" cy="4" r="1.7" fill="#0a6e62"/><circle cx="5" cy="4" r="0.8" fill="#1fc4ac"/></svg>
<div class="r" style="left:547px;top:206.91000000000003px;width:5px;height:5.0px;background:#5fd39a;"></div>
<div class="t " style="left:556.3px;top:202.91px;font-size:7.2px;line-height:14.4px;color:#dedede;font-weight:normal;">Benutzerdefiniert</div>
<div class="t " style="left:634.6px;top:202.91px;font-size:7.2px;line-height:14.4px;color:#dedede;font-weight:normal;">36s</div>
<div class="t " style="left:666.7px;top:202.91px;font-size:7.2px;line-height:14.4px;color:#dedede;font-weight:normal;">0,8</div>
<div class="t " style="left:687.6px;top:202.91px;font-size:7.2px;line-height:14.4px;color:#dedede;font-weight:normal;">0,06m</div>
<div class="t " style="left:714px;top:202.91px;font-size:7.2px;line-height:14.4px;color:#dedede;font-weight:normal;">0,18g</div>
<svg class="r" style="left:737px;top:205.31px;" width="10" height="8" viewBox="0 0 10 8"><path d="M0.8 4Q5 -1.5 9.2 4Q5 9.5 0.8 4z" fill="#009c88"/><circle cx="5" cy="4" r="1.7" fill="#0a6e62"/><circle cx="5" cy="4" r="0.8" fill="#1fc4ac"/></svg>
<div class="r" style="left:547px;top:218.62px;width:5px;height:5.0px;background:#4355b8;"></div>
<div class="t " style="left:556.3px;top:214.62px;font-size:7.2px;line-height:14.4px;color:#dedede;font-weight:normal;">Eilgang</div>
<div class="t " style="left:634.6px;top:214.62px;font-size:7.2px;line-height:14.4px;color:#dedede;font-weight:normal;">12m26s</div>
<div class="t " style="left:666.7px;top:214.62px;font-size:7.2px;line-height:14.4px;color:#dedede;font-weight:normal;">15,9</div>
<svg class="r" style="left:737px;top:217.01999999999998px;" width="10" height="8" viewBox="0 0 10 8"><path d="M1 4Q5 -1 9 4Q5 9 1 4z" style="stroke:#8a8a8a;fill:none;stroke-width:0.8"/><circle cx="5" cy="4" r="1.5" style="stroke:#8a8a8a;fill:none;stroke-width:0.8"/><path d="M2.2 0.8L7.8 7.2" style="stroke:#8a8a8a;stroke-width:0.8"/></svg>
<div class="r" style="left:547px;top:230.33000000000004px;width:5px;height:5.0px;background:#d62ad6;"></div>
<div class="t " style="left:556.3px;top:226.33px;font-size:7.2px;line-height:14.4px;color:#dedede;font-weight:normal;">Rückzug</div>
<svg class="r" style="left:737px;top:228.73000000000002px;" width="10" height="8" viewBox="0 0 10 8"><path d="M1 4Q5 -1 9 4Q5 9 1 4z" style="stroke:#8a8a8a;fill:none;stroke-width:0.8"/><circle cx="5" cy="4" r="1.5" style="stroke:#8a8a8a;fill:none;stroke-width:0.8"/><path d="M2.2 0.8L7.8 7.2" style="stroke:#8a8a8a;stroke-width:0.8"/></svg>
<div class="r" style="left:547px;top:242.04000000000002px;width:5px;height:5.0px;background:#40b4e0;"></div>
<div class="t " style="left:556.3px;top:238.04px;font-size:7.2px;line-height:14.4px;color:#dedede;font-weight:normal;">Einzug</div>
<svg class="r" style="left:737px;top:240.44px;" width="10" height="8" viewBox="0 0 10 8"><path d="M1 4Q5 -1 9 4Q5 9 1 4z" style="stroke:#8a8a8a;fill:none;stroke-width:0.8"/><circle cx="5" cy="4" r="1.5" style="stroke:#8a8a8a;fill:none;stroke-width:0.8"/><path d="M2.2 0.8L7.8 7.2" style="stroke:#8a8a8a;stroke-width:0.8"/></svg>
<div class="r" style="left:547px;top:253.75px;width:5px;height:5.0px;background:#f0f000;"></div>
<div class="t " style="left:556.3px;top:249.75px;font-size:7.2px;line-height:14.4px;color:#dedede;font-weight:normal;">Reinigen</div>
<svg class="r" style="left:737px;top:252.14999999999998px;" width="10" height="8" viewBox="0 0 10 8"><path d="M1 4Q5 -1 9 4Q5 9 1 4z" style="stroke:#8a8a8a;fill:none;stroke-width:0.8"/><circle cx="5" cy="4" r="1.5" style="stroke:#8a8a8a;fill:none;stroke-width:0.8"/><path d="M2.2 0.8L7.8 7.2" style="stroke:#8a8a8a;stroke-width:0.8"/></svg>
<div class="r" style="left:547px;top:265.46000000000004px;width:5px;height:5.0px;background:#e8e8e8;"></div>
<div class="t " style="left:556.3px;top:261.46px;font-size:7.2px;line-height:14.4px;color:#dedede;font-weight:normal;">Nähte</div>
<svg class="r" style="left:737px;top:263.86px;" width="10" height="8" viewBox="0 0 10 8"><path d="M0.8 4Q5 -1.5 9.2 4Q5 9.5 0.8 4z" fill="#009c88"/><circle cx="5" cy="4" r="1.7" fill="#0a6e62"/><circle cx="5" cy="4" r="0.8" fill="#1fc4ac"/></svg>
<div class="t " style="left:546.5px;top:278.60px;font-size:7.2px;line-height:14.4px;color:#f0f0f0;font-weight:bold;">Gesamtschätzung</div>
<div class="r" style="left:540px;top:290.5px;width:213px;height:1.0px;background:#5e5e5e;"></div>
<div class="t " style="left:546.5px;top:290.80px;font-size:7.2px;line-height:14.4px;color:#dedede;font-weight:normal;">Gesamtfilament:</div>
<div class="t " style="left:622.8px;top:290.80px;font-size:7.2px;line-height:14.4px;color:#dedede;font-weight:normal;">4,03 m</div>
<div class="t " style="left:653.2px;top:290.80px;font-size:7.2px;line-height:14.4px;color:#dedede;font-weight:normal;">12,31 g</div>
<div class="t " style="left:546.5px;top:301.55px;font-size:7.2px;line-height:14.4px;color:#dedede;font-weight:normal;">Modellfilament:</div>
<div class="t " style="left:622.8px;top:301.55px;font-size:7.2px;line-height:14.4px;color:#dedede;font-weight:normal;">4,03 m</div>
<div class="t " style="left:653.2px;top:301.55px;font-size:7.2px;line-height:14.4px;color:#dedede;font-weight:normal;">12,31 g</div>
<div class="t " style="left:546.5px;top:312.30px;font-size:7.2px;line-height:14.4px;color:#dedede;font-weight:normal;">Kosten:</div>
<div class="t " style="left:622.8px;top:312.30px;font-size:7.2px;line-height:14.4px;color:#dedede;font-weight:normal;">0,37</div>
<div class="t " style="left:546.5px;top:323.05px;font-size:7.2px;line-height:14.4px;color:#dedede;font-weight:normal;">Vorbereitungszeit:</div>
<div class="t " style="left:622.8px;top:323.05px;font-size:7.2px;line-height:14.4px;color:#dedede;font-weight:normal;">31s</div>
<div class="t " style="left:546.5px;top:333.80px;font-size:7.2px;line-height:14.4px;color:#dedede;font-weight:normal;">Druckzeit des Modells:</div>
<div class="t " style="left:622.8px;top:333.80px;font-size:7.2px;line-height:14.4px;color:#dedede;font-weight:normal;">1h18m</div>
<div class="t " style="left:546.5px;top:344.55px;font-size:7.2px;line-height:14.4px;color:#dedede;font-weight:normal;">Gesamtdauer:</div>
<div class="t " style="left:622.8px;top:344.55px;font-size:7.2px;line-height:14.4px;color:#dedede;font-weight:normal;">1h18m</div>
<div class="r" style="left:237px;top:38px;width:17px;height:17px;background:#f4f4f4;"></div>
<svg class="r" style="left:240px;top:41px;" width="11" height="11" viewBox="0 0 11 11"><path d="M4 1.5L1.5 4 4 6.5M7 4.5L9.5 7 7 9.5" style="stroke:#333;fill:none;stroke-width:1"/></svg>
<div class="r" style="left:241px;top:57px;width:69px;height:69px;background:#f5f5f5;border-radius:6px;"></div>
<div class="r" style="left:244px;top:61px;width:62px;height:62px;border:1.6px solid #009688;border-radius:3px;background:#e8e8e8;"></div>
<div class="t " style="left:249.5px;top:62.50px;font-size:7.5px;line-height:15.0px;color:#555;font-weight:normal;">1</div>
<div class="r" style="left:620px;top:358px;width:141px;height:60px;background:rgba(40,40,40,0.88);border-radius:5px;"></div>
<div class="r" style="left:622.3px;top:384px;width:136.70000000000005px;height:9.5px;border:1px solid #c0622a;"></div>
<div class="t " style="left:625px;top:360.35px;font-size:7.25px;line-height:14.5px;color:#c47a3e;font-weight:normal;">157355</div>
<div class="t " style="left:654px;top:360.35px;font-size:7.25px;line-height:14.5px;color:#9a9a9a;font-weight:normal;">;TYPE:Outer wall</div>
<div class="t " style="left:625px;top:370.80px;font-size:7.25px;line-height:14.5px;color:#c47a3e;font-weight:normal;">157356</div>
<div class="t " style="left:654px;top:370.80px;font-size:7.25px;line-height:14.5px;color:#bdb632;font-weight:normal;">G1</div>
<div class="t " style="left:664.8px;top:370.80px;font-size:7.25px;line-height:14.5px;color:#e0e0e0;font-weight:normal;">F600</div>
<div class="t " style="left:625px;top:381.25px;font-size:7.25px;line-height:14.5px;color:#c47a3e;font-weight:normal;">157357</div>
<div class="t " style="left:654px;top:381.25px;font-size:7.25px;line-height:14.5px;color:#bdb632;font-weight:normal;">G1</div>
<div class="t " style="left:664.8px;top:381.25px;font-size:7.25px;line-height:14.5px;color:#e0e0e0;font-weight:normal;">X99.882 Y104.457 E.00441</div>
<div class="t " style="left:625px;top:391.70px;font-size:7.25px;line-height:14.5px;color:#c47a3e;font-weight:normal;">157358</div>
<div class="t " style="left:654px;top:391.70px;font-size:7.25px;line-height:14.5px;color:#bdb632;font-weight:normal;">G1</div>
<div class="t " style="left:664.8px;top:391.70px;font-size:7.25px;line-height:14.5px;color:#e0e0e0;font-weight:normal;">X100.356 Y104.629 E.01708</div>
<div class="t " style="left:625px;top:402.15px;font-size:7.25px;line-height:14.5px;color:#c47a3e;font-weight:normal;">157359</div>
<div class="t " style="left:654px;top:402.15px;font-size:7.25px;line-height:14.5px;color:#bdb632;font-weight:normal;">G1</div>
<div class="t " style="left:664.8px;top:402.15px;font-size:7.25px;line-height:14.5px;color:#e0e0e0;font-weight:normal;">X100.777 Y104.906 E.01707</div>
<div class="r" style="left:761.5px;top:84px;width:22.5px;height:17.700000000000003px;background:#ffffff;"></div>
<div class="t " style="left:572.8px;width:400px;text-align:center;top:82.10px;font-size:7.2px;line-height:14.4px;color:#009688;font-weight:normal;">240</div>
<div class="t " style="left:572.8px;width:400px;text-align:center;top:89.40px;font-size:7.2px;line-height:14.4px;color:#009688;font-weight:normal;">48,00</div>
<div class="r" style="left:787.3px;top:102px;width:7.400000000000091px;height:292px;background:#ececec;"></div>
<div class="r" style="left:789px;top:102px;width:4px;height:292px;background:#009688;"></div>
<div class="r" style="left:787.2px;top:98.3px;width:7.5px;height:7.5px;border-radius:50%;background:#009688;"></div>
<div class="r" style="left:788.8px;top:101.6px;width:4.400000000000091px;height:0.9000000000000057px;background:#fff;"></div>
<div class="r" style="left:790.5px;top:100px;width:1.0px;height:4px;background:#fff;"></div>
<div class="r" style="left:787.2px;top:390.3px;width:7.5px;height:7.5px;border-radius:50%;background:#009688;"></div>
<div class="r" style="left:765px;top:394px;width:21.399999999999977px;height:17.69999999999999px;background:#ffffff;"></div>
<div class="t " style="left:575.7px;width:400px;text-align:center;top:392.30px;font-size:7.2px;line-height:14.4px;color:#009688;font-weight:normal;">1</div>
<div class="t " style="left:575.7px;width:400px;text-align:center;top:399.60px;font-size:7.2px;line-height:14.4px;color:#009688;font-weight:normal;">0,20</div>
<div class="r" style="left:487.7px;top:444.5px;width:176.3px;height:6.0px;background:#f4f4f4;border-radius:3px;"></div>
<div class="r" style="left:488.7px;top:445.5px;width:174.3px;height:4.0px;background:#d4d4d4;border-radius:2px;"></div>
<div class="r" style="left:353px;top:445.6px;width:117px;height:3.7999999999999545px;background:#009688;border-radius:2px;"></div>
<div class="r" style="left:466.3px;top:443.8px;width:7.5px;height:7.5px;border-radius:50%;background:#009688;"></div>
<div class="t " style="left:474px;top:440.40px;font-size:7.4px;line-height:14.8px;color:#009688;font-weight:bold;">: 29</div>
<div class="r" style="left:441.8px;top:409px;width:154.90000000000003px;height:28.399999999999977px;background:#ffffff;border-radius:2px;"></div>
<div class="t " style="left:453px;top:411.00px;font-size:7.0px;line-height:14.0px;color:#333;font-weight:normal;">X: <span style="color:#999">99,882</span></div>
<div class="t " style="left:500.7px;top:411.00px;font-size:7.0px;line-height:14.0px;color:#333;font-weight:normal;">Y: <span style="color:#999">104,457</span></div>
<div class="t " style="left:549.9px;top:411.00px;font-size:7.0px;line-height:14.0px;color:#333;font-weight:normal;">Z: <span style="color:#999">48,000</span></div>
<div class="t " style="left:453px;top:423.30px;font-size:7.3px;line-height:14.6px;color:#333;font-weight:normal;">Geschwindigkeit <span style="color:#999">10</span></div>
<svg class="r" style="left:777px;top:434px;" width="19" height="18" viewBox="0 0 19 18"><path d="M9.5 1L18 5.5 9.5 10 1 5.5z" fill="#009688"/><path d="M1 8.5L9.5 13 18 8.5" style="stroke:#009688;fill:none;stroke-width:2"/><path d="M1 12L9.5 16.5 18 12" style="stroke:#009688;fill:none;stroke-width:2"/></svg>
<svg class="r" style="left:244px;top:61px;" width="62" height="62" viewBox="0 0 62 62"><g transform="translate(-244,-61)"><polygon points="255.5,103.7 265.9,93.3 266.4,84.9 275.8,76.5 281.7,80.9 287.6,79.9 289.1,81.4 288.1,90.8 283.7,99.7 274.8,106.7 266.9,111.6 263.9,110.1 256,105.7" fill="#119484"/>
<polygon points="266.4,84.9 275.8,76.5 281.7,80.9 272.8,89.3" fill="#18a494"/>
<polygon points="281.7,80.9 287.6,79.9 289.1,81.4 288.1,90.8 283.7,99.7 274.8,106.7 273.3,97.7 272.8,89.3" fill="#0f887a"/>
<polygon points="255.5,103.7 265.9,93.3 273.3,97.7 274.8,106.7 266.9,111.6 256,105.7" fill="#159c8c"/>
<rect x="264.5" y="97.5" width="6.5" height="5.5" transform="rotate(-35 267.7 100.2)" fill="none" stroke="#0a6e62" stroke-width="0.9"/>
<rect x="270" y="80.5" width="3.5" height="3" transform="rotate(-35 271.7 82)" fill="#0b7568"/></g></svg>
</body></html>
